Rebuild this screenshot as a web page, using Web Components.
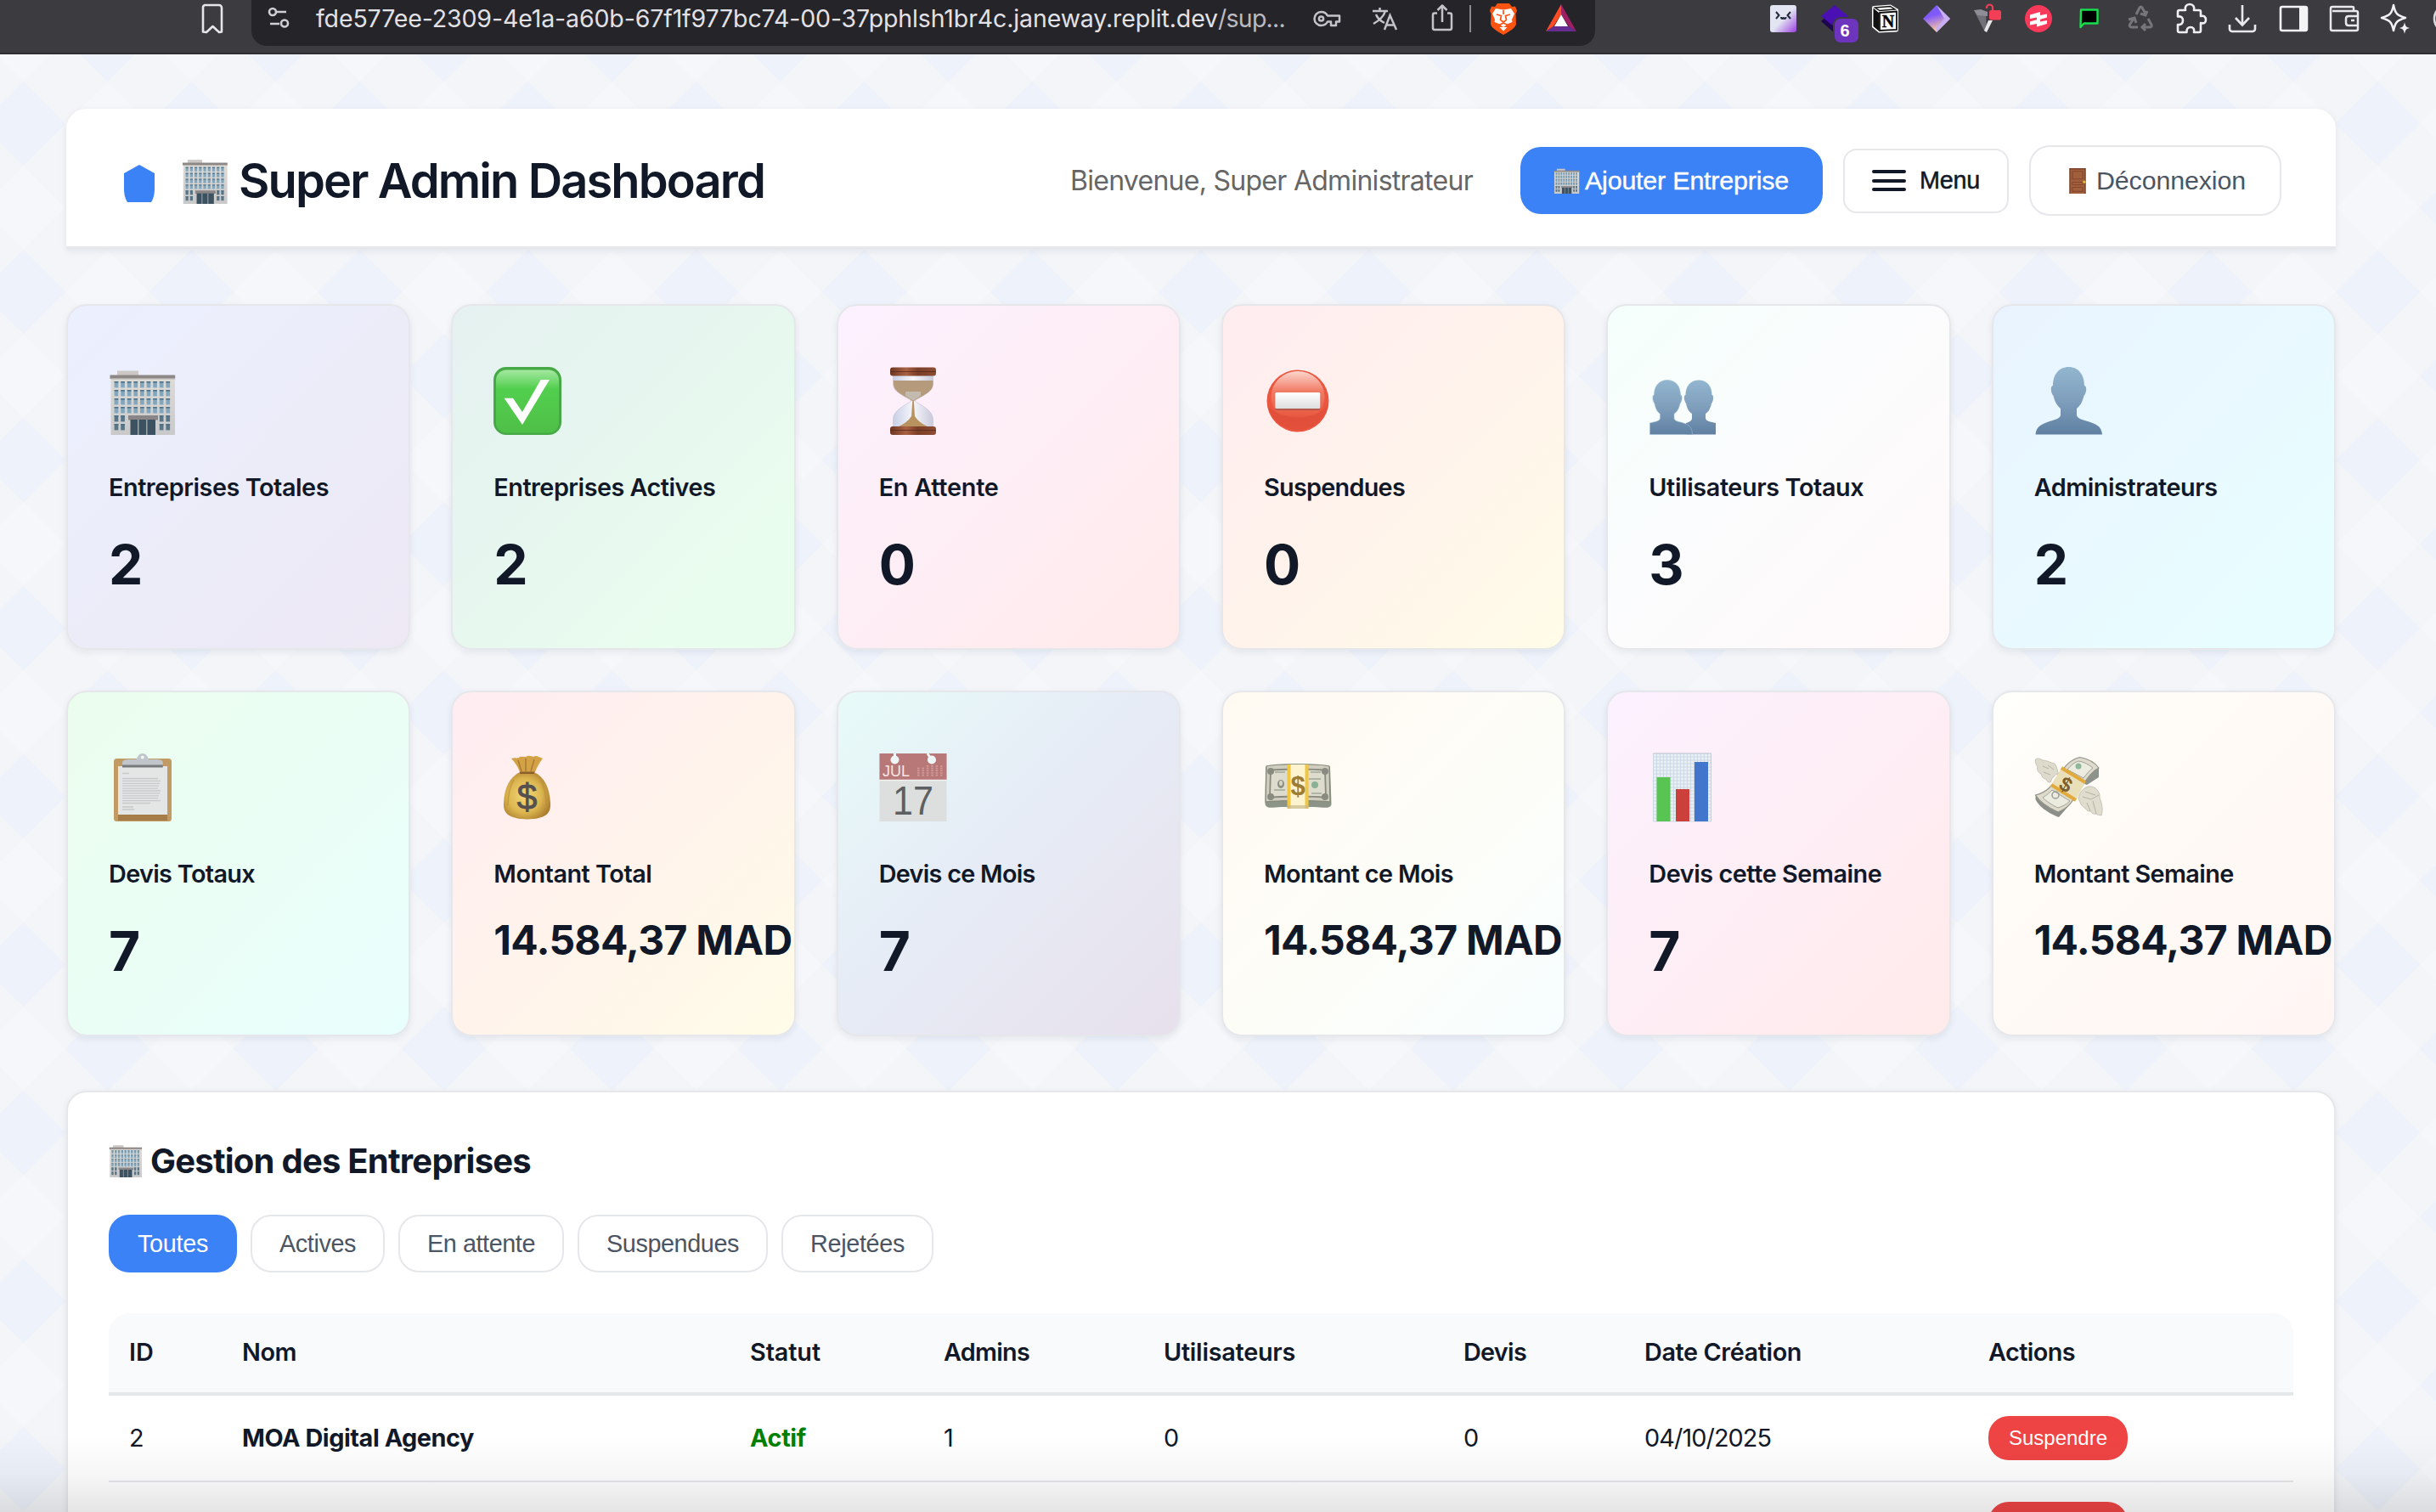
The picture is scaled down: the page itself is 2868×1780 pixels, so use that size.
<!DOCTYPE html>
<html lang="fr">
<head>
<meta charset="utf-8">
<title>Super Admin Dashboard</title>
<style>
html,body{margin:0;padding:0}
body{width:2868px;height:1780px;overflow:hidden;font-family:Inter,"Liberation Sans",sans-serif;color:#111827;background:#f3f5f9}
</style>
</head>
<body>
<app-window></app-window>
<script>
const fitted = [];

/* Single-line text whose tracking is tuned so that it spans the width given in "w". */
class FitText extends HTMLElement {
  constructor() {
    super();
    this.attachShadow({mode: 'open'}).innerHTML = '<style>:host{display:inline-block;white-space:nowrap}</style><slot></slot>';
  }
  connectedCallback() { if (!fitted.includes(this)) fitted.push(this); }
  fit() {
    const w = +this.getAttribute('w');
    if (!w) return;
    const natural = this.getBoundingClientRect().width;
    const n = this.textContent.length || this.getRootNode().host.textContent.length;
    this.style.letterSpacing = ((w - natural) / n).toFixed(3) + 'px';
  }
}
customElements.define('fit-text', FitText);

function component(name, render) {
  customElements.define(name, class extends HTMLElement {
    connectedCallback() {
      if (this.shadowRoot) return;
      this.attachShadow({mode: 'open'}).innerHTML = render(this);
    }
  });
}

/* ---------- pictograms, all on an 80 x 80 grid ---------- */
const P = {};
P.building = (() => {
  let w = '';
  for (let r = 0; r < 6; r++) for (let c = 0; c < 9; c++) {
    if (r > 3 && c > 1 && c < 7) continue;
    w += `<rect x="${6.6 + c * 7.6}" y="${17 + r * 10}" width="4.700" height="7.400" fill="${r > 3 ? '#587688' : '#82a7bd'}"/><rect x="${6.6 + c * 7.6}" y="${17 + r * 10}" width="4.700" height="1.600" fill="#4f6f84"/>`;
  }
  return `<defs><linearGradient id="b" x2="0" y2="1"><stop stop-color="#dedcd8"/><stop offset="1" stop-color="#c9c9ca"/></linearGradient></defs>
  <rect x="10" y="4.5" width="25" height="6" fill="#cdc8c5"/><rect x="2.5" y="12" width="75.5" height="68" fill="url(#b)"/>
  <rect x="1.5" y="9.5" width="76.7" height="4.5" fill="#8d8886"/><rect x="2.5" y="13.2" width="75.5" height="1.3" fill="#b9b5b1"/>${w}
  <rect x="23" y="57" width="35" height="5.5" fill="#8a8687"/><rect x="25.5" y="62" width="29.5" height="18" fill="#3d5260"/>
  <path d="M34.7 62v18M44.8 62v18" stroke="#a3aeb3" stroke-width="1.4"/>`;
})();
P.check = `<defs><linearGradient id="c" x2="0" y2="1"><stop stop-color="#a4e8a0"/><stop offset=".3" stop-color="#52cf4e"/><stop offset="1" stop-color="#4fbf47"/></linearGradient></defs>
  <rect width="80" height="80" rx="15" fill="#45a946"/><rect x="3" y="3.5" width="74" height="74" rx="12" fill="url(#c)"/>
  <path d="M12.6 36.7H23L34 53 55.7 15H66L34 68z" fill="#fff"/>`;
P.hourglass = `<defs><linearGradient id="h"><stop stop-color="#6d3622"/><stop offset=".35" stop-color="#a96143"/><stop offset=".6" stop-color="#7b3e27"/><stop offset="1" stop-color="#8d4c34"/></linearGradient><linearGradient id="g"><stop stop-color="#c9cfe6"/><stop offset=".5" stop-color="#f6f6fb"/><stop offset="1" stop-color="#c8cadb"/></linearGradient></defs>
  <path d="M16.500 10H63.500V20C63.500 30 48 35 42 40 48 45 63.500 50 63.500 62V71H16.500V62C16.500 50 32 45 38 40 32 35 16.500 30 16.500 20z" fill="url(#g)" stroke="#c2c0cc" stroke-width=".6"/>
  <path d="M17 16H63.500V20C63.500 30 50 34 41 40H39C31 34 17 30 17 20z" fill="#b59a7c"/><path d="M31 29H49V34L41 39H39L31 34z" fill="#c7c2bd" opacity=".8"/>
  <path d="M39.300 40H40.900L42 58Q47 66 58 70.500H22Q33 66 38 58z" fill="#b9935f"/><rect x="13" y=".5" width="54" height="10" rx="3" fill="url(#h)"/><rect x="13" y="70" width="54" height="10" rx="3" fill="url(#h)"/>
  <path d="M13 5.500H67M13 74.500H67" stroke="#512414" stroke-width="1.200" opacity=".7"/>`;
P.stop = `<defs><linearGradient id="s" x2="0" y2="1"><stop stop-color="#fbd6cd"/><stop offset=".4" stop-color="#f07a63"/><stop offset="1" stop-color="#e8513a"/></linearGradient><linearGradient id="t" x2="0" y2="1"><stop stop-color="#fff"/><stop offset="1" stop-color="#dededf"/></linearGradient></defs>
  <circle cx="40" cy="40" r="36.500" fill="#eb5640"/><ellipse cx="40" cy="35" rx="31.500" ry="30" fill="url(#s)"/><path d="M4.500 46A36.500 36.500 0 0 0 75.500 46 45 34 0 0 1 4.500 46z" fill="#dc4b37" opacity=".6"/>
  <rect x="13.300" y="31" width="53" height="20" rx="1.500" fill="#b45a4c"/><rect x="13.300" y="30" width="53" height="19" rx="1.500" fill="url(#t)"/>`;
const shade = '<defs><linearGradient id="p" x2="0" y2="1"><stop stop-color="#93b6cf"/><stop offset=".5" stop-color="#7f9ebc"/><stop offset="1" stop-color="#6080a2"/></linearGradient></defs>';
P.user = shade + '<path d="M40.600 0C52 0 59 9 59 22c3 0 3 8-.5 12-2 8-5 12-8.500 15v7c0 5 6 5.500 13 8C74 67.500 79 70 80 79.500H1.500C2.500 70 8 67.500 18 64c7-2.500 13-3 13-8v-7c-3.500-3-6.500-7-8.500-15-3.500-4-3.500-12-.5-12C22 9 29 0 40.600 0z" fill="url(#p)"/>';
P.users = shade + `<path d="M59 15.500c9.500 0 15.500 7 15.500 17.500 2.500 0 2 7-.5 10-1.500 7-4 10-7 12v5c0 4 6 4.500 12 6v13.500H44V66c5-1.500 7-3 7-6v-5c-3-2-5.500-5-7-12-2.500-3-3-10-.5-10C43.500 22.500 49.500 15.500 59 15.500z" fill="url(#p)"/>
  <path d="M22 15.500c9.500 0 15.500 7 15.500 17.500 2.500 0 2 7-.5 10-1.500 7-4 10-7 12v5c0 4 5 4 11 6 7 2 10.500 6 10.500 13.500H1.500V66c6-1.500 12-2 12-6v-5c-3-2-5-5-6.500-12-2.500-3-3-10-.5-10C6.500 22.500 12.500 15.500 22 15.500z" fill="url(#p)" stroke="#9cbcd2" stroke-width=".6"/>`;
P.clipboard = (() => {
  let l = '';
  for (let i = 0; i < 11; i++) l += `<path d="M16 ${29.500 + i * 2.9}h${i == 10 ? 33 : 42 + (i * 7) % 4}" stroke="#c6c9c9" stroke-width="1.300"/>`;
  return `<rect x="6" y="6" width="68" height="74" rx="3.500" fill="#c29a63"/><path d="M11 72h58v7H11z" fill="#a67c48"/>
  <rect x="11" y="15" width="58" height="57" fill="#e4e6e6"/>${l}<path d="M16 23.500h8M16 63h13M16 66h14" stroke="#c6c9c9" stroke-width="1.300"/>
  <path d="M16 14V11c0-3 3-4 8-4h8c2-1 2-7 7.800-7s6 6 8 7h8c5 0 8 1 8 4v3z" fill="#bfc5ca"/><circle cx="39.800" cy="4.500" r="2" fill="#eefaf2"/><path d="M16 13.500h47.800v3H16z" fill="#777b7b"/>`;
})();
P.bag = `<defs><radialGradient id="m" cx=".45" cy=".5" r=".6"><stop stop-color="#f3d878"/><stop offset=".6" stop-color="#dcb650"/><stop offset="1" stop-color="#a97a2c"/></radialGradient></defs>
  <path d="M21 6c4-2 7 1 10-2 4-1 5 1 9-1 4-1 7 2 9 0 4 0 6 2 9 3-4 5-7 10-9 16H31C29 16 25 10 21 6z" fill="#d3a246"/><path d="M29 8l4 13M38 6v15M48 7l-4 14" stroke="#a97b30" stroke-width="1.500"/>
  <path d="M31 22h17c12 6 18 18 19 36 1 13-6 19-27 19.500C19 77 11 71 12 58c1-18 7-30 19-36z" fill="url(#m)"/><path d="M31 21.500h17v2.500H31z" fill="#8a5f2a"/><path d="M24 31c-5 8-7 18-7 30M55 31c5 8 7 18 7 30" stroke="#b98c36" stroke-width="1.500" fill="none" opacity=".6"/>
  <text x="39.500" y="66" font-family="Liberation Sans" font-size="43" text-anchor="middle" fill="#55504f" stroke="#55504f" stroke-width=".8">$</text>`;
P.calendar = (() => {
  let d = '';
  for (let r = 0; r < 5; r++) for (let c = 0; c < 6; c++) if (!(r == 0 && c < 2)) d += `<rect x="${45 + c * 5.400}" y="${14 + r * 2.700}" width="2.600" height="1.700" fill="#d09a9a"/>`;
  return `<rect x=".5" width="79" height="80" fill="#dddfde"/><rect x=".5" width="79" height="31" fill="#b87878"/><path d="M.5 31.500h79" stroke="#f2f2f2" stroke-width="1.500"/>
  <circle cx="18.500" cy="7.500" r="5" fill="#eef7f7"/><circle cx="62" cy="7.500" r="5" fill="#eef7f7"/><path d="M18.500 0v8M57 0l5 8" stroke="#eef7f7" stroke-width="3"/>${d}
  <text x="4" y="26.500" font-family="Liberation Sans" font-size="18" textLength="32" lengthAdjust="spacingAndGlyphs" fill="#f4e6e6">JUL</text>
  <text x="40" y="72" font-family="Liberation Sans" font-size="49" textLength="48" lengthAdjust="spacingAndGlyphs" text-anchor="middle" fill="#5d5f60">17</text>`;
})();
P.cash = `<path d="M2 16C12 11 68 11 78 16L79.500 60c-1 5-8 4-20 3H20C9 64 3 65 1.500 60z" fill="#8b9486"/><path d="M3 15C14 12 66 12 77 15l1 42c-14-2-62-2-76 0z" fill="#cfcdbd" stroke="#838577" stroke-width="1.200"/>
  <path d="M8 20c12-2 52-2 64 0l1 32c-16-2-50-2-66 0z" fill="#dedccc" stroke="#8a8b80" stroke-width="1.800"/><ellipse cx="20" cy="36" rx="4" ry="5" fill="#8d8f84"/><ellipse cx="20" cy="35" rx="2" ry="3" fill="#d8d6c7"/><circle cx="60" cy="37" r="4" fill="#89b294"/>
  <path d="M13 22h12M55 22h12M12 43h13M53 30h14M56 47h12" stroke="#9fa897" stroke-width="1.500"/><g fill="#8a8b80"><circle cx="8" cy="21" r="4"/><circle cx="72" cy="21" r="4"/><circle cx="8" cy="51" r="4"/><circle cx="72" cy="51" r="4"/></g>
  <rect x="27.500" y="13" width="25" height="52" fill="#f3c63f"/><rect x="31.500" y="13" width="17" height="52" fill="#fdf4cf"/><path d="M27.500 61h25v4h-25z" fill="#c9b98c" opacity=".7"/>
  <text x="40" y="49" font-family="Liberation Sans" font-weight="700" font-size="31" text-anchor="middle" fill="#9c7d33">$</text>`;
P.chart = (() => {
  let g = '';
  for (let i = 0; i <= 17; i++) g += `M${5.500 + i * 4} 0v80`;
  for (let i = 0; i <= 20; i++) g += `M5.500 ${i * 4}h68`;
  return `<rect x="5.500" width="68" height="80" fill="#ebeff3"/><path d="${g}" stroke="#c8d6e2" stroke-width=".9"/><path d="M5.500 0h68v80" fill="none" stroke="#c9c9d2" stroke-width="1"/>
  <rect x="9.500" y="28" width="16" height="52" fill="#58c553"/><rect x="32" y="42" width="16" height="38" fill="#cc403c"/><rect x="54" y="10" width="16" height="70" fill="#4276cc"/>`;
})();
P.wings = `<path d="M1.500 49L34 44 47 54 29 75 26 74C15 69 5 62 1.500 54z" fill="#8b8f88"/><path d="M53.500 5C62 7 71 11 76 18V28L62 37 40 28z" fill="#8d928b"/>
  <path d="M53.500 4.500C62 6 71 10 76 17 66 22 61 32 54 42 46 54 42 64 28 69 17 64 7 58 1.500 49 17 45 22 36 27 28 35 17 40 8 53.500 4.500z" fill="#dedbcd" stroke="#92938a" stroke-width="1.200"/>
  <path d="M52 9c7 1 12 4 17 8-5 4-8 8-11 12L39 19c4-5 7-8 13-10zM21 43l21 13c-4 4-8 6-14 8-7-3-14-8-18-12 5-3 8-6 11-9z" fill="#ecebdf" stroke="#a2a299" stroke-width="1"/>
  <circle cx="52" cy="15" r="3.500" fill="#8fb79a"/><circle cx="25" cy="49" r="4" fill="none" stroke="#999" stroke-width="1.500"/>
  <path d="M32 17L60 34 49 55 20 37z" fill="#e9dfb9"/><path d="M32 17L60 34M20 37L49 55" stroke="#e2a93b" stroke-width="4"/>
  <text x="38" y="45" transform="rotate(28 38 35)" font-family="Liberation Sans" font-weight="700" font-size="24" text-anchor="middle" fill="#7e5f2c">$</text>
  <path d="M1.500 7C4 5 7 6 10 8c5 0 9 3 14 4 3 4 4 9 4 12-4 0-4 4-7 5l-2 5c-3 0-4-1-5-4-4 0-5-3-6-6-4-2-5-5-4-8C2 13 1 10 1.500 7z" fill="#dedbcd" stroke="#bab7a9" stroke-width=".8"/><path d="M10 15l7 3M11 22l8 3M16 14l7 5" stroke="#b5b2a4"/>
  <path d="M52 53c1-6 5-12 11-14 6-1 11 2 13 7 2 3 0 6 2 9 2 5 3 12 1 18-4-1-4 0-6-2-4 1-5-1-7-3-4 0-5-2-6-4-4-1-6-6-8-11z" fill="#e0ddcf" stroke="#bab7a9" stroke-width=".8"/><path d="M57 51l10 3 9-5M62 58l4 10M69 56l4 15M60 45l12 4" stroke="#b5b2a4" fill="none"/>`;
P.door = `<rect x="14" width="52" height="80" fill="#7a4029"/><rect x="18" y="4" width="44" height="76" fill="#a25f3c"/><g fill="none" stroke="#834730" stroke-width="3"><path d="M24 10h32v24H24zM24 44h32v8H24zM24 60h32v13H24z"/></g><circle cx="61" cy="43" r="4.500" fill="#e6b93a"/>`;
const svg80 = (k, w, h) => `<svg width="${w}" height="${h || w}" viewBox="0 0 80 80" aria-hidden="true">${P[k]}</svg>`;

component('app-emoji', el => `<style>:host{display:block;line-height:0}svg{display:block;overflow:visible}</style>${svg80(el.getAttribute('kind'), el.getAttribute('size') || 80)}`);

/* ---------- browser toolbar, icons on a 32 x 32 grid ---------- */
const T = {
bookmark: '<path d="M6 0h17a3 3 0 0 1 3 3v28.500l-3 .5-7.500-7L8 32l-4-.5V3a3 3 0 0 1 2-3z" fill="none" stroke="#e6e6ea" stroke-width="2.600" stroke-linejoin="round"/>',
tune: '<g fill="none" stroke="#cfced4" stroke-width="2.600"><circle cx="8" cy="9" r="4"/><path d="M12 9h12M5 23h11"/><circle cx="22" cy="22.500" r="4"/></g>',
key: '<g fill="none" stroke="#c4c3c9" stroke-width="2.500" stroke-linejoin="round"><path d="M17 12.500C15.500 9.500 13 8 9.500 8a8 8 0 1 0 0 16c3.500 0 6-1.500 7.500-4.500h4V24h6v-4.500h4v-7z"/><circle cx="9.500" cy="16" r="2.600"/></g>',
translate: '<g fill="none" stroke="#c4c3c9" stroke-width="2.500"><path d="M2 7h18M10.500 3v4M17 7c-2 7-7 11-14 15M6 11c2 5 6 8 10 10M16 29l6.500-17L30 29M18.500 23.500h8"/></g>',
share: '<g fill="none" stroke="#c4c3c9" stroke-width="2.500" stroke-linejoin="round"><path d="M10 9.500H7a2 2 0 0 0-2 2V27a2 2 0 0 0 2 2h18a2 2 0 0 0 2-2V11.500a2 2 0 0 0-2-2h-3M16 20V1M10.500 6L16 .5 21.500 6"/></g>',
brave: '<path d="M9-2h14l3 4 4-.5 2 5-1.500 4 .5 12c-1 5-10 9.500-15 12.500C11 32 2 27.500 1 22.500l.5-12L0 6.500l2-5L6 2z" fill="#fb5410"/><path d="M7 4l9 1.500L25 4l4 6-3 7 .5 3-6.500 2.500-1 1.500-3 2-3-2-1-1.500L5.500 20 6 17l-3-7z" fill="#fff"/><path d="M11.500 26h9L16 30.500z" fill="#fff"/><path d="M8 11l5.500 1.500-1 5L16 20M24 11l-5.500 1.500 1 5L16 20M11 23.500l5-2.500 5 2.500M16 6v5" fill="none" stroke="#fb5410" stroke-width="1.700"/>',
bat: '<path d="M16-1L-2 31l9-6 9-14z" fill="#ff4b24"/><path d="M16-1l18 32-9-6-9-14z" fill="#9e1f63"/><path d="M-2 31h36l-9-6H7z" fill="#662d91"/><path d="M16 11l8 14H8z" fill="#fff"/>',
ext: '<defs><linearGradient id="q" x2="1" y2="1"><stop offset=".5" stop-color="#e3e6f2"/><stop offset="1" stop-color="#9b3fe0"/></linearGradient></defs><rect width="31" height="32" rx="3" fill="url(#q)"/><path d="M7 8l3.500 4L7 16M24 8l-3.500 4 3.500 4M13 14c0 2.500 2.500 2.500 2.500 0 0 2.500 3 2.500 3 0" fill="none" stroke="#222a3c" stroke-width="2"/>',
cube: '<path d="M0 19L16 5l16 14-16 14z" fill="#1f0550"/><path d="M0 13L16 0l16 13-16 13z" fill="#4b10b4"/><rect x="14" y="14" width="32" height="32" rx="9" fill="#3c3b40"/><rect x="16" y="16" width="28" height="28" rx="7" fill="#6d35bd"/><text x="28" y="37" font-family="Liberation Sans" font-weight="700" font-size="20" text-anchor="middle" fill="#fff">6</text>',
notion: '<path d="M0 3Q0 1 2 1L22-.5 31 5v24q0 2-2 2.500L8 32.500 0 26z" fill="#fff"/><path d="M1.500 3.500L8 9v21.500L1.500 25z" fill="#111"/><path d="M3.500 3l18-1.500L27 5 9 6.500z" fill="#fff" stroke="#111" stroke-width="1.400"/><path d="M9 9l20-1.500V29L9 30z" fill="#fff" stroke="#111" stroke-width="1.800"/><text x="19" y="26" font-family="Liberation Serif" font-weight="700" font-size="20" text-anchor="middle" fill="#000" stroke="#000" stroke-width=".4">N</text>',
gem: '<defs><linearGradient id="r" x2=".3" y2="1"><stop stop-color="#7a5cf0"/><stop offset=".45" stop-color="#8059fa"/><stop offset="1" stop-color="#ffc9a0"/></linearGradient></defs><path d="M16 0l16 16-16 16L0 16z" fill="url(#r)"/><path d="M16 0l16 16-16 16v-6l9-10z" fill="#c6aef0"/>',
tower: '<path d="M0 6l14 2 1 24-3-2z" fill="#717078"/><path d="M0 6l8-1 8 3v5l-12-1z" fill="#8f8e97"/><path d="M12 30l3 2 7-14h-5z" fill="#e7e7ea"/><rect x="18" y="6" width="14" height="11.500" rx="2" fill="#f23e57"/><path d="M22 6V3a3.500 3.500 0 0 0-7 0v1" fill="none" stroke="#f23e57" stroke-width="2.200"/>',
red: '<circle cx="16" cy="16" r="16" fill="#f8395a"/><path d="M6 11.500L18 8v4l8-1.500v4L14 18v-3.500L6 16zM6 19.500L18 16v3.500l8-1.500v4l-12 3.500V22l-8 1.500z" fill="#fff"/>',
chat: '<path d="M6 5.500h19.500v16H9.500L5.500 26z" fill="#000" stroke="#16e04b" stroke-width="2.400" stroke-linejoin="round"/>',
recycle: '<g fill="none" stroke="#77767b" stroke-width="3"><path d="M11 11l4-8q1.500-2 3 0l4 7M24 7l-2 5-6-2M25 16l4 7q1 3-2 3h-8M22 22l-4 4 4 4M13 26H5q-3-1-1-4l4-6M2 17l7-2 2 6"/></g>',
puzzle: '<path d="M3 6h7c-1-4 1-7 5-7s6 3 5 7h6a2 2 0 0 1 2 2v5c4-1 6 1 6 4.500S32 22 28 21v9a2 2 0 0 1-2 2h-6c1-4-1-6-4-6s-5 2-4.500 6H3a2 2 0 0 1-2-2v-7c4 .5 6-1.500 6-5s-2-5-6-4.500V8a2 2 0 0 1 2-2z" fill="none" stroke="#f0eff3" stroke-width="2.600" stroke-linejoin="round" transform="translate(-1 0)"/>',
download: '<path d="M16 0v23M8 15l8 8.500 8-8.500M1 23v5a3 3 0 0 0 3 3h24a3 3 0 0 0 3-3v-5" fill="none" stroke="#e9e9ec" stroke-width="2.600"/>',
panel: '<rect x="1" y="2" width="31" height="28" rx="2" fill="none" stroke="#f4f4f6" stroke-width="2.600"/><path d="M23 2h9v28h-9z" fill="#f4f4f6"/>',
wallet: '<g fill="none" stroke="#e9e9ec" stroke-width="2.500" stroke-linejoin="round" transform="translate(-1 0)"><path d="M28 7V3q0-1-2-1H3Q1 2 1 4v24q0 2 2 2h28q2 0 2-2V9q0-2-2-2H3M33 13H22q-3 0-3 3v5q0 3 3 3h11"/><path d="M25 18h4"/></g>',
spark: '<path d="M15 0c2 10 4 12 14 15-10 3-12 5-14 15C13 20 11 18 1 15 11 12 13 10 15 0z" fill="none" stroke="#f2f2f5" stroke-width="2.500" stroke-linejoin="round" transform="translate(-1 0)"/><path d="M27 20c1 5 2 6 6 7-4 1-5 2-6 7-1-5-2-6-6-7 4-1 5-2 6-7z" fill="#f2f2f5"/>',
edge: '<circle cx="18" cy="16" r="16" fill="none" stroke="#d9d9dd" stroke-width="2.600"/>'
};
component('bar-icon', el => `<style>:host{display:block;width:32px;height:32px;flex:none}svg{display:block;overflow:visible}</style><svg width="32" height="32" viewBox="0 0 32 32" aria-hidden="true">${T[el.getAttribute('kind')]}</svg>`);

component('browser-bar', () => `<style>
:host{display:flex;height:62px;background:#3c3b40;border-bottom:2px solid #2e2d32;overflow:hidden;align-items:flex-start}
.mark{margin:6px 29px 0 235px}
.url{box-sizing:border-box;width:1582px;height:54px;background:#252429;border-radius:0 0 18px 18px;display:flex;align-items:flex-start;padding:6px 24px 0 17px;font-size:28.500px;line-height:32px;color:#e2e1e6;flex:none}
.url .t{margin-left:27px;width:1174px;white-space:nowrap;flex:none}
.dim{color:#bbbac0}
.d{width:2px;height:32px;background:#8c8b91;margin:0 22px 0 16px;flex:none}
.key,.tr,.br{margin-right:36px}
.ext{display:flex;gap:28px;margin:6px 0 0 206px}
</style>
<bar-icon class="mark" kind="bookmark"></bar-icon>
<div class="url"><bar-icon kind="tune" style="margin-top:-1px"></bar-icon><div class="t"><fit-text w="1062">fde577ee-2309-4e1a-a60b-67f1f977bc74-00-37pphlsh1br4c.janeway.replit.dev</fit-text><fit-text class="dim" w="79">/sup...</fit-text></div>
<bar-icon class="key" kind="key"></bar-icon><bar-icon class="tr" kind="translate"></bar-icon><bar-icon kind="share"></bar-icon><div class="d"></div><bar-icon class="br" kind="brave"></bar-icon><bar-icon kind="bat"></bar-icon></div>
<div class="ext">${'ext cube notion gem tower red chat recycle puzzle download panel wallet spark edge'.split(' ').map(k => `<bar-icon kind="${k}"></bar-icon>`).join('')}</div>`);

/* ---------- page header ---------- */
component('page-header', () => `<style>
:host{display:flex;align-items:center;box-sizing:border-box;height:166px;padding:7px 64px 0 68px;background:#fff;border-bottom:4px solid #e5e7eb;border-radius:24px 24px 0 0;box-shadow:0 2px 8px rgba(17,24,39,.07)}
.shield{margin:6px 32px 0 0}
h1{margin:0 auto 0 12px;font-size:56px;font-weight:620;line-height:64px}
.hi{font-size:32px;color:#666;margin-right:56px;line-height:40px}
.btn{box-sizing:border-box;display:flex;align-items:center;font:30.400px/36px "Liberation Sans",Arial,sans-serif;flex:none}
.btn fit-text{margin-top:-1px}
.add{width:356px;height:79px;border-radius:24px;background:#3b82f6;color:#fff;padding-left:39px;margin-right:24px}
.add fit-text{margin-left:6px;-webkit-text-stroke:.4px #fff}
.menu{width:195px;height:76px;border:2px solid #e5e7eb;border-radius:16px;padding-left:32px;margin-right:24px;font-size:28.800px}
.menu fit-text{margin-left:16px;-webkit-text-stroke:.5px #111827}
.bars{display:flex;flex-direction:column;gap:6.500px;width:40px}.bars i{height:4px;border-radius:2px;background:#111827}
.out{width:297px;height:83px;border:2px solid #e5e7eb;border-radius:24px;padding-left:40px;color:#4b5563}
.out fit-text{margin-left:7px}
</style>
<svg class="shield" width="36" height="44" viewBox="0 0 36 44"><path d="M18 0L36 10V29Q36 38 32 44H4Q0 38 0 29V10z" fill="#3b82f6"/></svg>
<app-emoji kind="building" size="55"></app-emoji><h1><fit-text w="619">Super Admin Dashboard</fit-text></h1>
<div class="hi"><fit-text w="474">Bienvenue, Super Administrateur</fit-text></div>
<div class="btn add"><app-emoji kind="building" size="31"></app-emoji><fit-text w="240">Ajouter Entreprise</fit-text></div>
<div class="btn menu"><div class="bars"><i></i><i></i><i></i></div><fit-text w="71">Menu</fit-text></div>
<div class="btn out"><app-emoji kind="door" size="30"></app-emoji><fit-text w="176">Déconnexion</fit-text></div>`);

/* ---------- statistics ---------- */
component('stat-card', el => `<style>
:host{display:block;box-sizing:border-box;height:407px;padding:72px 0 0 48px;border:2px solid #e5e7eb;border-radius:24px;background:linear-gradient(135deg,${el.getAttribute('bg')}) border-box;box-shadow:0 3px 8px rgba(17,24,39,.07);white-space:nowrap}
.l{margin-top:42px;font-size:28.800px;line-height:40px;font-weight:600}
.v{margin-top:31px;font-size:64px;line-height:80px;font-weight:700}
.v.m{margin-top:30px;font-size:48px;line-height:56px}
</style><app-emoji kind="${el.getAttribute('icon')}"></app-emoji>
<div class="l"><fit-text w="${el.getAttribute('w') - 1}">${el.getAttribute('label')}</fit-text></div>
<div class="v${el.hasAttribute('money') ? ' m' : ''}">${el.hasAttribute('money') ? '<fit-text w="351"><slot></slot></fit-text>' : '<slot></slot>'}</div>`);

const stats = [
['building','Entreprises Totales',260,'2','#ebf0fe,#ede8f4'],
['check','Entreprises Actives',262,'2','#e5f1f0,#e6f6ef 40%,#e9fdee 80%'],
['hourglass','En Attente',142,'0','#fcf1ff,#ffeaea'],
['stop','Suspendues',167,'0','#ffecf0,#fff3eb 50%,#fffce8'],
['users','Utilisateurs Totaux',254,'3','#f4fffb,#fbfcfd 45%,#fff8f9'],
['user','Administrateurs',217,'2','#e9f3ff,#e8fdff 80%'],
['clipboard','Devis Totaux',173,'7','#ebfded,#e9fffd'],
['bag','Montant Total',187,'14.584,37 MAD','#ffecf2,#fff3eb 50%,#fffce8'],
['calendar','Devis ce Mois',185,'7','#e7fbf8,#e6edf6 40%,#e7e0ec'],
['cash','Montant ce Mois',224,'14.584,37 MAD','#fff9f1,#fdfdf7 50%,#f7feff'],
['chart','Devis cette Semaine',275,'7','#fcf1ff,#ffeaea'],
['wings','Montant Semaine',236,'14.584,37 MAD','#fffffb,#fffaf6 40%,#fff6f4']
];
component('stats-grid', () => `<style>:host{display:grid;grid-template-columns:repeat(6,minmax(0,1fr));gap:48px}</style>` +
  stats.map(s => `<stat-card icon="${s[0]}" label="${s[1]}" w="${s[2]}" bg="${s[4]}"${s[3].length > 2 ? ' money' : ''}>${s[3]}</stat-card>`).join(''));

/* ---------- company management ---------- */
component('filter-pill', el => `<style>:host{box-sizing:border-box;display:flex;align-items:center;height:68px;padding:0 32px;border:2px solid #e5e7eb;border-radius:24px;background:#fff;color:#4b5563;font:28.800px/34px "Liberation Sans",Arial,sans-serif}
:host([active]){background:#3b82f6;border-color:#3b82f6;color:#fff}fit-text{margin-top:-1px}</style><fit-text w="${el.getAttribute('w')}"><slot></slot></fit-text>`);

component('company-table', () => {
  const head = [['ID',29],['Nom',64],['Statut',83],['Admins',101],['Utilisateurs',155],['Devis',74],['Date Création',185],['Actions',102]];
  return `<style>:host{display:block;font-size:28.800px;line-height:40px}
.r{display:grid;grid-template-columns:133px 598px 228px 259px 353px 213px 405px 383px;align-items:center}
.r>*{padding-left:24px}
.h{height:92px;padding-bottom:1px;background:#f9fafc;border-bottom:4px solid #e5e7eb;border-radius:24px 24px 0 0;font-weight:600}
.b{height:99.500px;border-bottom:2px solid #e5e7eb}
.n{font-weight:700}.ok{font-weight:700;color:#008000}
.s{display:flex;align-items:center;justify-content:center;width:164px;height:52px;border-radius:24px;background:#ef4444;color:#fff;font:24px/28px "Liberation Sans",Arial,sans-serif}
</style>
<div class="r h">${head.map(h => `<div><fit-text w="${h[1]}">${h[0]}</fit-text></div>`).join('')}</div>
<div class="r b"><div>2</div><div class="n"><fit-text w="273">MOA Digital Agency</fit-text></div><div class="ok"><fit-text w="66">Actif</fit-text></div><div>1</div><div>0</div><div>0</div><div><fit-text w="149">04/10/2025</fit-text></div><div><div class="s">Suspendre</div></div></div>
<div class="r b"><div></div><div></div><div></div><div></div><div></div><div></div><div></div><div><div class="s"></div></div></div>`;
});

component('company-panel', () => `<style>
:host{display:block;box-sizing:border-box;height:640px;padding:57px 48px 0;background:#fff;border:2px solid #e5e7eb;border-radius:24px;box-shadow:0 2px 8px rgba(17,24,39,.07)}
h2{margin:0;display:flex;align-items:center;font-size:40px;line-height:48px;font-weight:700}
h2 app-emoji{margin-top:-2px}
h2 fit-text{margin-left:9px}
.f{display:flex;gap:16px;margin:39px 0 48px}
</style>
<h2><app-emoji kind="building" size="40"></app-emoji><fit-text w="448">Gestion des Entreprises</fit-text></h2>
<div class="f"><filter-pill active w="83">Toutes</filter-pill><filter-pill w="90">Actives</filter-pill><filter-pill w="127">En attente</filter-pill><filter-pill w="156">Suspendues</filter-pill><filter-pill w="111">Rejetées</filter-pill></div>
<company-table></company-table>`);

component('app-window', () => `<style>
:host{display:flex;flex-direction:column;width:2868px;height:1780px;overflow:hidden;position:relative}
.weave{position:absolute;inset:0}
browser-bar,main{position:relative}
main{flex:1;min-height:0;padding:64px 118px 0 78px}
stats-grid{margin:64px 0}
.fade{position:absolute;left:0;right:0;bottom:0;height:90px;background:linear-gradient(transparent,rgba(0,0,0,.03) 50%,rgba(0,0,0,.1))}
</style>
<svg class="weave" width="2868" height="1780" aria-hidden="true"><defs><pattern id="w" x="-22" y="-2.800" width="197.990" height="197.990" patternUnits="userSpaceOnUse">
<rect width="198" height="198" fill="#f3f5f9"/>
<path d="M49.500 0L99 49.500 49.500 99 0 49.500zM148.500 99L198 148.500 148.500 198 99 148.500z" fill="#f6f7fb"/>
<path d="M148.500 0L198 49.500 148.500 99 99 49.500zM49.500 99L99 148.500 49.500 198 0 148.500z" fill="#edf2fb"/>
</pattern></defs><rect width="2868" height="1780" fill="url(#w)"/></svg>
<browser-bar></browser-bar><main><page-header></page-header><stats-grid></stats-grid><company-panel></company-panel></main><div class="fade"></div>`);

fitted.forEach(t => t.fit());
</script>
</body>
</html>
